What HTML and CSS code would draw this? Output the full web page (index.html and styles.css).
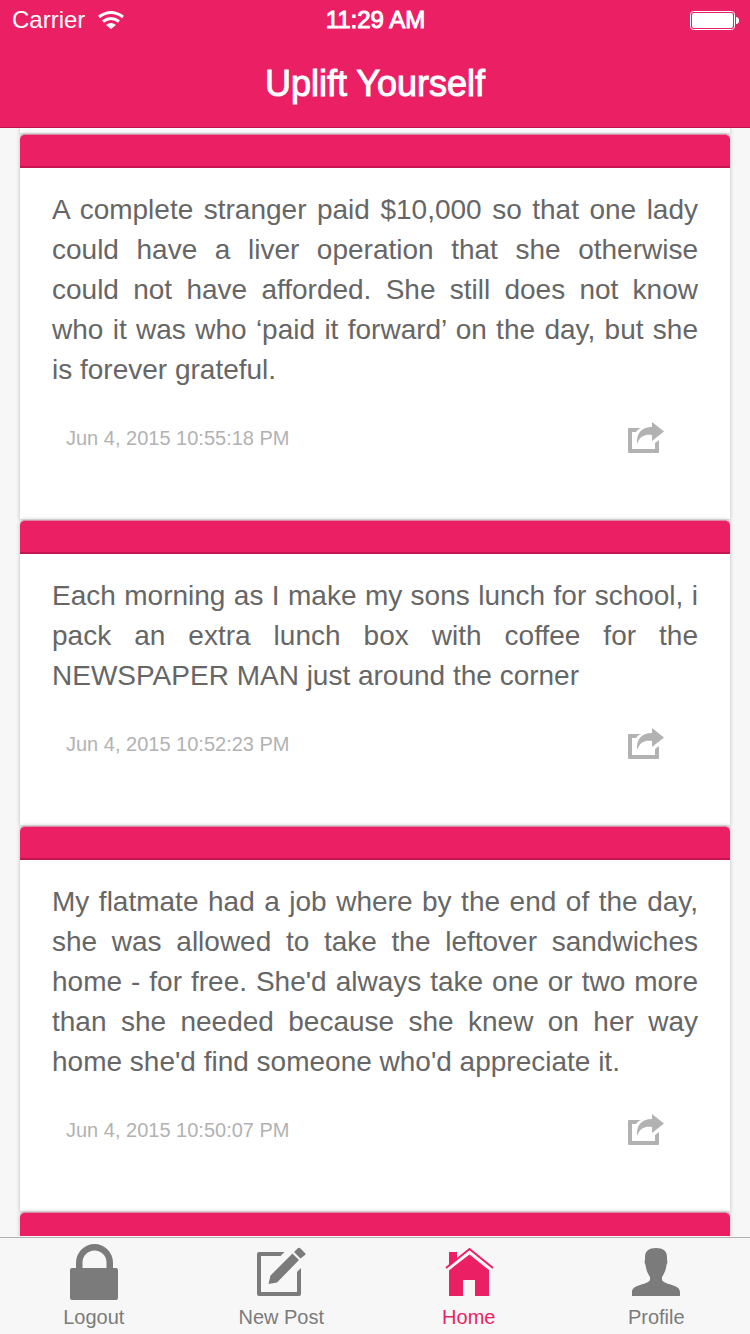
FILE: index.html
```html
<!DOCTYPE html>
<html lang="en">
<head>
<meta charset="utf-8">
<meta name="viewport" content="width=device-width, initial-scale=1">
<title>Uplift Yourself</title>
<link rel="stylesheet" href="styles.css">
</head>
<body>
<svg class="sprite" aria-hidden="true">
  <symbol id="share" viewBox="0 0 36 32">
    <path d="M13 6H1Q0 6 0 7V30Q0 31 1 31H30Q31 31 31 30V18L27 21V27H4V10H8Q10 7 13 6Z"/>
    <path d="M24 0L36 9.500L24 19V13C17 12 12 14 9 22C8 12 13 5 24 5Z"/>
  </symbol>
</svg>
<header class="header">
  <div class="status">
    <div class="carrier">Carrier
      <svg class="wifi" viewBox="0 0 26 18" aria-hidden="true">
        <g fill="none" stroke="#fff" stroke-width="3"><path d="M1 6Q13 -3 25 6"/><path d="M5 10.500Q13 4.500 21 10.500"/></g>
        <path d="M8 14Q13 10 18 14L13 18Z" fill="#fff"/>
      </svg>
    </div>
    <div class="clock">11:29 AM</div>
    <svg class="battery" viewBox="0 0 49 19" role="img" aria-label="Battery full">
      <rect x=".5" y=".5" width="44" height="18" rx="3" fill="none" stroke="#fff"/>
      <rect x="2" y="2" width="41" height="15" rx="2" fill="#fff"/>
      <path d="M46 6Q49 6 49 9.500T46 13Z" fill="#fff"/>
    </svg>
  </div>
  <h1 class="title">Uplift Yourself</h1>
</header>
<main class="feed">
  <div class="post post-end"></div>
  <article class="post">
    <div class="bar"></div>
    <p class="text">A complete stranger paid $10,000 so that one lady could have a liver operation that she otherwise could not have afforded. She still does not know who it was who ‘paid it forward’ on the day, but she is forever grateful.</p>
    <footer class="meta"><time>Jun 4, 2015 10:55:18 PM</time><button class="share" aria-label="Share"><svg><use href="#share"/></svg></button></footer>
  </article>
  <article class="post">
    <div class="bar"></div>
    <p class="text">Each morning as I make my sons lunch for school, i pack an extra lunch box with coffee for the NEWSPAPER MAN just around the corner</p>
    <footer class="meta"><time>Jun 4, 2015 10:52:23 PM</time><button class="share" aria-label="Share"><svg><use href="#share"/></svg></button></footer>
  </article>
  <article class="post">
    <div class="bar"></div>
    <p class="text">My flatmate had a job where by the end of the day, she was allowed to take the leftover sandwiches home - for free. She'd always take one or two more than she needed because she knew on her way home she'd find someone who'd appreciate it.</p>
    <footer class="meta"><time>Jun 4, 2015 10:50:07 PM</time><button class="share" aria-label="Share"><svg><use href="#share"/></svg></button></footer>
  </article>
  <article class="post">
    <div class="bar"></div>
  </article>
</main>
<nav class="tabs">
  <a class="tab" href="#logout">
    <svg viewBox="0 0 52 58"><path d="M2 27Q2 25 4 25H8V19.500A18.500 18.500 0 0 1 45 19.500V25H48Q50 25 50 27V55Q50 57 48 57H4Q2 57 2 55ZM14.500 25H38.500V19.500A12 12 0 0 0 14.500 19.500Z" fill-rule="evenodd"/></svg>
    <span>Logout</span>
  </a>
  <a class="tab" href="#new">
    <svg viewBox="0 0 52 58"><path d="M29.500 9L25.500 13H6V49H42V29L46 25V51Q46 53 44 53H4Q2 53 2 51V11Q2 9 4 9Z"/><path d="M37.500 10.500L44 17L22 39.500L13.500 41L15.500 32.500ZM39 9L42.500 5.500Q44 4 45.500 5.500L50 10Q51 11 50 12L45.500 15.500Z"/></svg>
    <span>New Post</span>
  </a>
  <a class="tab current" href="#home" aria-current="page">
    <svg viewBox="0 0 52 58"><path d="M6 9H14V17L6 23ZM26.500 11.500L46 27V53H32V37H20V53H6V27Z"/><path d="M4 27L26.500 8.500L49 27" fill="none" stroke="#f7f7f7" stroke-width="3"/><path d="M3 25L26.500 6L50 25" fill="none" stroke="currentColor" stroke-width="2"/></svg>
    <span>Home</span>
  </a>
  <a class="tab" href="#profile">
    <svg viewBox="0 0 52 58"><path d="M26 5C33 5 37 8 37 14V17Q38 19 36.500 22C36 27 34 31 32 34V37C34 42 50 41 50 49V53H2V49C2 41 18 42 20 37V34C18 31 16 27 15.500 22Q14 19 15 17V14C15 8 19 5 26 5Z"/></svg>
    <span>Profile</span>
  </a>
</nav>
</body>
</html>
```
FILE: styles.css
```css
* { box-sizing: border-box; }
body {
  margin: 0;
  height: 100vh;
  display: flex;
  flex-direction: column;
  background: #f7f7f7;
  color: #666;
  font-family: "Liberation Sans", Arial, sans-serif;
}
.sprite { display: none; }
.header {
  flex: none;
  height: 128px;
  background: #eb1f63;
  border-bottom: 1px solid #b8174d;
  color: #fff;
}
.status {
  display: grid;
  grid-template-columns: 1fr auto 1fr;
  align-items: center;
  height: 40px;
  padding: 0 11px 0 12px;
  font-size: 24px;
  line-height: 30px;
}
.carrier { display: flex; align-items: center; gap: 13px; }
.wifi { width: 26px; height: 18px; }
.clock { -webkit-text-stroke: 1px #fff; }
.battery { width: 49px; height: 19px; justify-self: end; }
.title {
  margin: 0;
  font-size: 36px;
  font-weight: 400;
  line-height: 88px;
  text-align: center;
  -webkit-text-stroke: 1px #fff;
}
.feed {
  flex: 1;
  min-height: 0;
  overflow: hidden;
  padding: 0 20px;
  margin-bottom: 1px;
}
.post {
  background: #fff;
  border-bottom: 1px solid #ddd;
  border-radius: 5px 5px 0 0;
  box-shadow: 0 0 4px #bbb;
}
.post-end { height: 6px; border-radius: 0; }
.bar {
  height: 34px;
  background: #eb1f63;
  border-top: 1px solid #d98ba5;
  border-bottom: 2px solid #c4174f;
  border-radius: 5px 5px 0 0;
}
.text {
  margin: 0;
  padding: 22px 32px 0;
  font-size: 28px;
  line-height: 40px;
  text-align: justify;
}
.meta {
  display: flex;
  align-items: center;
  justify-content: space-between;
  padding: 31px 66px 64px 46px;
  color: #b2b2b2;
  font-size: 20px;
  line-height: 34px;
}
.share {
  display: flex;
  padding: 0;
  border: 0;
  background: none;
  color: inherit;
}
.share svg { width: 36px; height: 32px; fill: currentColor; }
.tabs {
  flex: none;
  display: grid;
  grid-template-columns: repeat(4, 1fr);
  height: 97px;
  border-top: 1px solid #b0b0b0;
  background: #f7f7f7;
}
.tab {
  display: flex;
  flex-direction: column;
  align-items: center;
  padding-top: 5px;
  color: #7b7b7b;
  font-size: 20px;
  line-height: 32px;
  text-decoration: none;
}
.tab svg { width: 52px; height: 58px; fill: currentColor; }
.current { color: #eb1f63; }
```
